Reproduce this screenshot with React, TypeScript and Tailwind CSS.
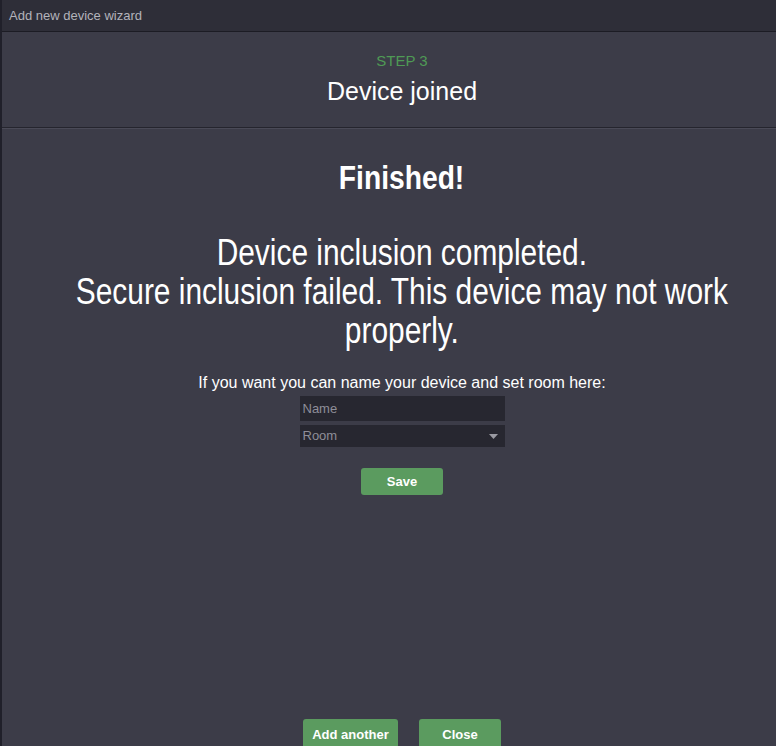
import { useState } from "react";

export default function App() {
  const [name, setName] = useState("");

  return (
    <div className="w-[776px] h-[746px] overflow-hidden flex flex-col bg-[#3c3c48] border-l-2 border-[#20202a] font-['Liberation_Sans',Arial,sans-serif] text-white">
      {/* header */}
      <div className="h-[31px] shrink-0 flex items-center pl-[7px] bg-[#2e2e38] text-[13px] text-[#b3b3bb]">
        Add new device wizard
      </div>
      <div className="h-px shrink-0 bg-[#1c1c24]" />

      {/* step title */}
      <div className="h-[95px] shrink-0 flex flex-col items-center pt-[20px] pl-[26px]">
        <p className="text-[15px] leading-[18px] text-[#4f9a55]">STEP 3</p>
        <h1 className="text-[25px] leading-[30px] mt-[6px]">Device joined</h1>
      </div>
      <div className="h-px shrink-0 bg-[#25252e]" />
      <div className="h-px shrink-0 bg-[#4a4a57]" />

      {/* content */}
      <div className="flex-1 flex flex-col items-center pl-[26px]">
        <h2 className="mt-[28px] text-[34px] leading-[40px] font-bold whitespace-nowrap scale-x-[0.83]">
          Finished!
        </h2>
        <p className="mt-[36px] text-center text-[36px] leading-[39px] whitespace-nowrap scale-x-[0.83]">
          Device inclusion completed.
          <br />
          Secure inclusion failed. This device may not work
          <br />
          properly.
        </p>

        <p className="mt-[23px] text-[16px] leading-[20px]">
          If you want you can name your device and set room here:
        </p>
        <input
          value={name}
          onChange={(e) => setName(e.target.value)}
          placeholder="Name"
          className="mt-[3px] w-[205px] h-[25px] px-[3px] bg-[#272730] text-[13px] text-white placeholder:text-[#8e8e98] outline-none"
        />
        <div className="mt-[4px] w-[205px] h-[22px] flex items-center justify-between pl-[3px] pr-[7px] bg-[#272730] text-[13px] text-[#8e8e98]">
          <span>Room</span>
          <svg width="9" height="5" viewBox="0 0 9 5">
            <path d="M0 0h9L4.5 5z" fill="#9a9aa2" />
          </svg>
        </div>
        <button className="mt-[21px] w-[82px] h-[27px] rounded-[3px] bg-[#5b9b5f] text-[13px] font-bold">
          Save
        </button>

        <div className="mt-[224px] flex gap-[21px]">
          <button className="w-[95px] h-[28px] pt-[4px] rounded-t-[3px] bg-[#5b9b5f] text-[13px] leading-[16px] font-bold">
            Add another
          </button>
          <button className="w-[82px] h-[28px] pt-[4px] rounded-t-[3px] bg-[#5b9b5f] text-[13px] leading-[16px] font-bold">
            Close
          </button>
        </div>
      </div>
    </div>
  );
}
